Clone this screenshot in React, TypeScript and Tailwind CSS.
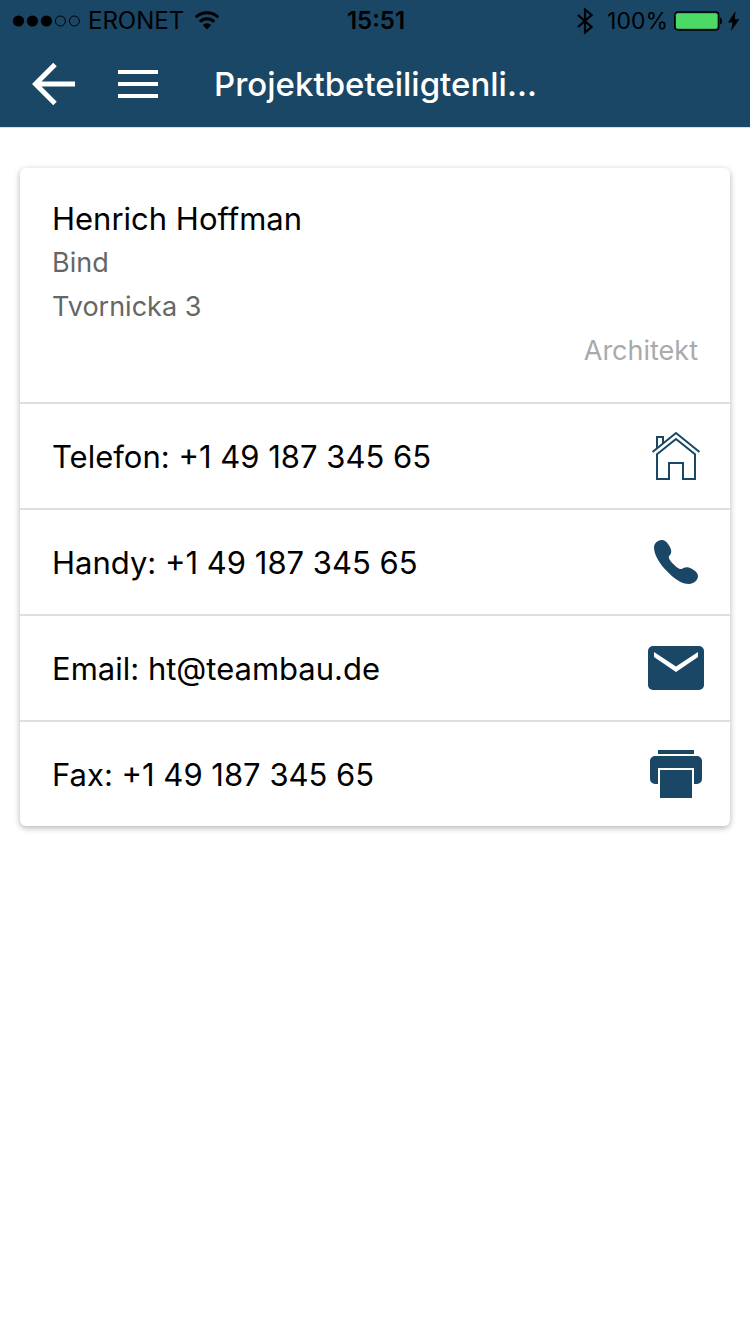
import type { ReactNode } from "react";

function SignalDots() {
  return (
    <svg width="68" height="12" viewBox="0 0 68 12" aria-hidden="true">
      <circle cx="6.500" cy="6" r="5.600" />
      <circle cx="20.400" cy="6" r="5.600" />
      <circle cx="34.400" cy="6" r="5.600" />
      <circle cx="48.400" cy="6" r="5" fill="none" stroke="currentColor" />
      <circle cx="62.400" cy="6" r="5" fill="none" stroke="currentColor" />
    </svg>
  );
}

function WifiIcon() {
  return (
    <svg width="28" height="20" viewBox="-2 0 28 20" fill="none" stroke="currentColor" strokeWidth="3" aria-hidden="true">
      <path d="M1.800 6.200a16 16 0 0 1 22.400 0" />
      <path d="M5.800 10.800a10.200 10.200 0 0 1 14.400 0" />
      <path d="M13 18.500l-4.200-4.500a6 6 0 0 1 8.400 0z" fill="currentColor" stroke="none" />
    </svg>
  );
}

function BluetoothIcon() {
  return (
    <svg width="16" height="28" viewBox="0 0 16 28" fill="none" stroke="currentColor" strokeWidth="2.200" aria-hidden="true">
      <path d="M1 8l13.500 12L8 25.500v-23L14.500 8 1 20" />
    </svg>
  );
}

function BatteryIcon() {
  return (
    <svg width="48" height="20" viewBox="0 0 48 20" aria-hidden="true">
      <rect x="0.750" y="1" width="44" height="18" rx="3" fill="none" stroke="currentColor" strokeWidth="1.300" />
      <rect x="2" y="2.200" width="41.500" height="15.600" rx="2" fill="#4cd964" />
      <path d="M46 6.500c1.500.3 2 1.700 2 3.500s-.5 3.200-2 3.500z" />
    </svg>
  );
}

function BoltIcon() {
  return (
    <svg width="12" height="20" viewBox="0 0 12 20" aria-hidden="true">
      <path d="M7.500 0L0 11.500h4.500L3 20l8.500-11.800H6.800z" />
    </svg>
  );
}

function BackIcon() {
  return (
    <svg width="44" height="44" viewBox="0 0 44 44" fill="none" stroke="currentColor" strokeWidth="5" aria-hidden="true">
      <path d="M23 2.500L3.500 22 23 41.500M3.500 22H43" />
    </svg>
  );
}

function MenuIcon() {
  return (
    <svg width="40" height="28" viewBox="0 0 40 28" fill="currentColor" aria-hidden="true">
      <path d="M0 0h40v4H0zM0 12h40v4H0zM0 24h40v4H0z" />
    </svg>
  );
}

function HomeIcon() {
  return (
    <svg width="56" height="56" viewBox="0 0 56 56" fill="none" stroke="currentColor" strokeWidth="2" aria-hidden="true">
      <path d="M4.500 24L28 5l23.500 19" />
      <path d="M9 20.500V9h6v6.500" />
      <path d="M9 26.300L28 11l19 15.300V51H35V35H21v16H9z" />
    </svg>
  );
}

function PhoneIcon() {
  return (
    <svg width="56" height="56" viewBox="0 0 56 56" fill="currentColor" aria-hidden="true">
      <path d="M13.500 6C9.500 6.200 6 9.500 6 13.500c0 7 5.500 16.500 13.500 24.200C27 45.300 34 50 41 50c4.500 0 9-3.800 9-8 0-3-2.800-5.200-5.800-7-3.200-1.800-5.700-2.200-8.200-1.200-1.800.8-2.800 1.600-4.200 1.200-1.500-.4-4.300-2.700-6.800-5.200-2-2-4-4.500-4.200-6.300-.2-1.500 1.500-2.300 2.200-4.300.8-2.300-.3-5.400-2.300-8.200C18.500 7.600 16.500 5.900 13.500 6z" />
    </svg>
  );
}

function MailIcon() {
  return (
    <svg width="56" height="56" viewBox="0 0 56 56" aria-hidden="true">
      <rect y="6" width="56" height="44" rx="5" fill="currentColor" />
      <path d="M6 12l22 14.500L50 12v5L28 32 6 17z" fill="#fff" />
    </svg>
  );
}

function PrinterIcon() {
  return (
    <svg width="56" height="56" viewBox="0 0 56 56" fill="currentColor" aria-hidden="true">
      <path d="M10 4h36v4H10z" />
      <path d="M7 10h42a5 5 0 0 1 5 5v18a5 5 0 0 1-5 5h-3V22H10v16H7a5 5 0 0 1-5-5V15a5 5 0 0 1 5-5z" />
      <path d="M12 24h32v28H12z" />
    </svg>
  );
}

type Contact = { label: string; value: string; href: string; icon: ReactNode };

const contacts: Contact[] = [
  { label: "Telefon", value: "+1 49 187 345 65", href: "tel:+14918734565", icon: <HomeIcon /> },
  { label: "Handy", value: "+1 49 187 345 65", href: "tel:+14918734565", icon: <PhoneIcon /> },
  { label: "Email", value: "ht@teambau.de", href: "mailto:ht@teambau.de", icon: <MailIcon /> },
  { label: "Fax", value: "+1 49 187 345 65", href: "fax:+14918734565", icon: <PrinterIcon /> },
];

function StatusBar() {
  return (
    <div className="grid h-10 grid-cols-[1fr_auto_1fr] items-center pt-0.5 pr-2.5 pl-3 text-2xl text-black">
      <div className="flex items-center gap-2">
        <SignalDots />
        <span>ERONET</span>
        <WifiIcon />
      </div>
      <span className="font-semibold">15:51</span>
      <div className="flex items-center justify-end gap-1.5">
        <BluetoothIcon />
        <span className="pl-2 text-[23px]">100%</span>
        <BatteryIcon />
        <BoltIcon />
      </div>
    </div>
  );
}

export default function App() {
  return (
    <div className="min-h-screen bg-white font-['Inter','Liberation_Sans',sans-serif] text-black">
      <header className="border-b border-[#d8dde2] bg-[#1a4766]">
        <StatusBar />
        <div className="flex h-[87px] items-center px-8 text-white">
          <button type="button" aria-label="Zurück">
            <BackIcon />
          </button>
          <button type="button" aria-label="Menü" className="ml-[42px]">
            <MenuIcon />
          </button>
          <h1 className="ml-14 text-[33px] leading-10 font-medium">Projektbeteiligtenli...</h1>
        </div>
      </header>
      <main className="px-5 py-10">
        <section className="divide-y-2 divide-[#dedede] rounded-md bg-white shadow-[0_2px_6px_rgba(0,0,0,0.3)]">
          <div className="px-8 pt-[31px] pb-[29px] text-[27px] leading-[44px] text-[#666666]">
            <h2 className="pb-0.5 text-[31px] leading-10 text-black">Henrich Hoffman</h2>
            <p>Bind</p>
            <p>Tvornicka 3</p>
            <p className="text-right text-[#aaaaaa]">Architekt</p>
          </div>
          {contacts.map((c) => (
            <a key={c.label} href={c.href} className="flex h-[106px] items-center justify-between pr-[26px] pl-8 text-[31px] last:h-[104px]">
              <span className="pt-0.5">
                {c.label}: {c.value}
              </span>
              <span className="text-[#1a4766]">{c.icon}</span>
            </a>
          ))}
        </section>
      </main>
    </div>
  );
}
